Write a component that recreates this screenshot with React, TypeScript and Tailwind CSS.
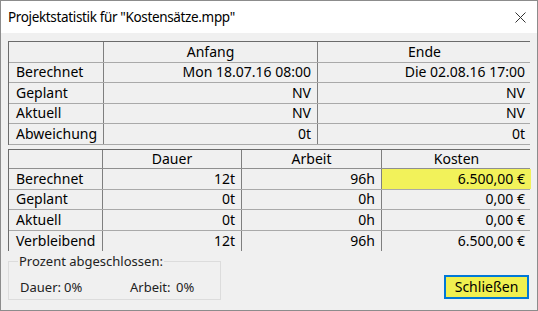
import React from 'react';

// --- Statistik-Daten ---
const termine = [
    { label: 'Berechnet', anfang: 'Mon 18.07.16 08:00', ende: 'Die 02.08.16 17:00' },
    { label: 'Geplant', anfang: 'NV', ende: 'NV' },
    { label: 'Aktuell', anfang: 'NV', ende: 'NV' },
    { label: 'Abweichung', anfang: '0t', ende: '0t' },
];

const werte = [
    { label: 'Berechnet', dauer: '12t', arbeit: '96h', kosten: '6.500,00 €', highlight: true },
    { label: 'Geplant', dauer: '0t', arbeit: '0h', kosten: '0,00 €' },
    { label: 'Aktuell', dauer: '0t', arbeit: '0h', kosten: '0,00 €' },
    { label: 'Verbleibend', dauer: '12t', arbeit: '96h', kosten: '6.500,00 €' },
];

const cellBase = 'flex items-center border-r border-[#7f7f7f] leading-none';
const rowBase = 'grid h-[20.5px] border-b border-[#a9a9a9]';

const App: React.FC = () => {
    return (
        <div className="w-[538px] h-[311px] flex flex-col border border-[#8c8c8c] bg-[#f0f0f0] text-black font-['Noto_Sans',sans-serif] text-[14px]">
            {/* Titelleiste */}
            <div className="h-[32px] shrink-0 bg-white flex items-center justify-between pl-[7px] pr-[11px]">
                <span className="text-[13.5px] tracking-[-0.35px]">Projektstatistik für "Kostensätze.mpp"</span>
                <svg width="11" height="11" viewBox="0 0 11 11" className="text-[#333]">
                    <path d="M0.5 0.5 L10.5 10.5 M10.5 0.5 L0.5 10.5" stroke="currentColor" strokeWidth="1" fill="none" />
                </svg>
            </div>

            <div className="flex flex-col pl-[7px] pt-[8px]">
                {/* Termine */}
                <div className="w-[522px] border-t border-l border-[#6b6b6b]">
                    <div className={`${rowBase} grid-cols-[95px_214px_213px] border-[#8f8f8f]`}>
                        <div className={cellBase}></div>
                        <div className={`${cellBase} justify-center`}>Anfang</div>
                        <div className="flex items-center justify-center leading-none">Ende</div>
                    </div>
                    {termine.map(t => (
                        <div key={t.label} className={`${rowBase} grid-cols-[95px_214px_213px]`}>
                            <div className={`${cellBase} pl-[7px]`}>{t.label}</div>
                            <div className={`${cellBase} justify-end pr-[6px]`}>{t.anfang}</div>
                            <div className="flex items-center justify-end pr-[6px] leading-none">{t.ende}</div>
                        </div>
                    ))}
                </div>

                {/* Dauer / Arbeit / Kosten */}
                <div className="w-[522px] mt-[4px] border-t border-l border-[#6b6b6b]">
                    <div className="grid h-[19.5px] border-b border-[#8f8f8f] grid-cols-[94px_139px_140px_149px]">
                        <div className={cellBase}></div>
                        <div className={`${cellBase} justify-center`}>Dauer</div>
                        <div className={`${cellBase} justify-center`}>Arbeit</div>
                        <div className="flex items-center justify-center leading-none">Kosten</div>
                    </div>
                    {werte.map((w, i) => (
                        <div key={w.label} className={`grid h-[20.5px] grid-cols-[94px_139px_140px_149px] ${i < werte.length - 1 ? 'border-b border-[#a9a9a9]' : ''}`}>
                            <div className={`${cellBase} pl-[7px]`}>{w.label}</div>
                            <div className={`${cellBase} justify-end pr-[6px]`}>{w.dauer}</div>
                            <div className={`${cellBase} justify-end pr-[6px]`}>{w.arbeit}</div>
                            <div className={`flex items-center justify-end pr-[6px] leading-none ${w.highlight ? 'bg-[#f2f25a]' : ''}`}>{w.kosten}</div>
                        </div>
                    ))}
                </div>

                {/* Fußbereich */}
                <div className="flex items-start justify-between pr-[8px] mt-[4px]">
                    <fieldset className="w-[213px] h-[45px] border border-[#dcdcdc] px-[11px] text-[13px] text-[#222]">
                        <legend className="px-[1px] -ml-[2px] leading-none">Prozent abgeschlossen:</legend>
                        <div className="flex items-center mt-[13px] leading-none">
                            <span className="w-[44px]">Dauer:</span>
                            <span className="w-[66px]">0%</span>
                            <span className="w-[46px]">Arbeit:</span>
                            <span>0%</span>
                        </div>
                    </fieldset>
                    <button className="mt-[20px] w-[85px] h-[24px] border-2 border-[#0078d7] bg-[#f0f050] text-[14px] leading-none">
                        Schließen
                    </button>
                </div>
            </div>
        </div>
    );
};

export default App;
